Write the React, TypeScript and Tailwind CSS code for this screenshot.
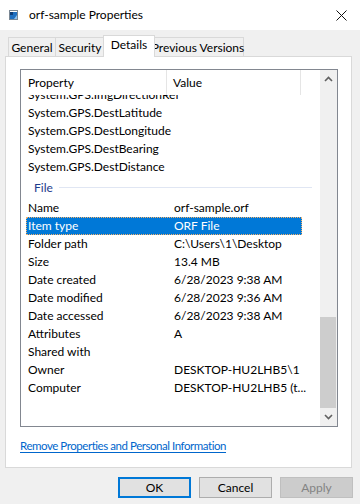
import { ReactNode } from "react";

type Row = { name: string; value: string; selected?: boolean };

const gpsRows = [
  "System.GPS.DestLatitude",
  "System.GPS.DestLongitude",
  "System.GPS.DestBearing",
  "System.GPS.DestDistance",
];

const fileRows: Row[] = [
  { name: "Name", value: "orf-sample.orf" },
  { name: "Item type", value: "ORF File", selected: true },
  { name: "Folder path", value: "C:\\Users\\1\\Desktop" },
  { name: "Size", value: "13.4 MB" },
  { name: "Date created", value: "6/28/2023 9:38 AM" },
  { name: "Date modified", value: "6/28/2023 9:36 AM" },
  { name: "Date accessed", value: "6/28/2023 9:38 AM" },
  { name: "Attributes", value: "A" },
  { name: "Shared with", value: "" },
  { name: "Owner", value: "DESKTOP-HU2LHB5\\1" },
  { name: "Computer", value: "DESKTOP-HU2LHB5 (t..." },
];

function Tab({ label, active, w }: { label: string; active?: boolean; w: string }) {
  if (active) {
    return (
      <div
        className={`${w} h-[22px] -mx-[2px] z-10 bg-white border border-b-0 border-[#d9d9d9] flex items-start justify-center pt-[3px] text-black shrink-0`}
      >
        {label}
      </div>
    );
  }
  return (
    <div
      className={`${w} h-[20px] bg-[#f0f0f0] border border-b-0 border-[#d9d9d9] -ml-px first:ml-0 flex items-center justify-center text-black shrink-0 whitespace-nowrap`}
    >
      {label}
    </div>
  );
}

function ItemRow({ row }: { row: Row }) {
  return (
    <div className="h-[18px] flex items-center pl-[5px] leading-[16px]">
      <div
        className={`w-[276px] h-[18px] flex items-center ${
          row.selected ? "bg-[#0078d7] text-white border border-dotted border-[#f5b26b]" : "text-black"
        }`}
      >
        <span className={`${row.selected ? "w-[147px] pl-[1px]" : "w-[148px] pl-[2px]"} shrink-0 whitespace-nowrap`}>
          {row.name}
        </span>
        <span className="whitespace-nowrap">{row.value}</span>
      </div>
    </div>
  );
}

function Btn({ children, kind }: { children: ReactNode; kind: "default" | "normal" | "disabled" }) {
  const cls =
    kind === "default"
      ? "border-2 border-[#0078d7] bg-[#e1e1e1] text-black"
      : kind === "normal"
      ? "border border-[#adadad] bg-[#e1e1e1] text-black"
      : "border border-[#bfbfbf] bg-[#cccccc] text-[#838383]";
  return <div className={`w-[73px] h-[21px] flex items-center justify-center ${cls}`}>{children}</div>;
}

export default function App() {
  return (
    <div
      className="w-[360px] h-[504px] bg-[#f0f0f0] flex flex-col text-[12px] leading-none overflow-hidden"
      style={{ fontFamily: 'Lato, "Liberation Sans", Arial, sans-serif' }}
    >
      {/* title bar */}
      <div className="h-[30px] bg-white flex items-center shrink-0">
        <svg width="9" height="10" viewBox="0 0 9 10" className="ml-[9px] mr-[11px]">
          <rect x="0.5" y="0.5" width="8" height="9" fill="#fff" stroke="#7a8794" />
          <rect x="1" y="2" width="7" height="7" fill="#1f6fc0" />
          <rect x="1" y="2" width="3" height="3" fill="#0d3d78" />
          <path d="M5 9 L8 5 L8 9 Z" fill="#8ec3f0" />
        </svg>
        <span className="text-[12px] text-black">orf-sample Properties</span>
        <svg width="11" height="11" viewBox="0 0 11 11" className="ml-auto mr-[13px]">
          <path d="M0.5 0.5 L10.5 10.5 M10.5 0.5 L0.5 10.5" stroke="#111" strokeWidth="1" />
        </svg>
      </div>

      {/* tabs */}
      <div className="h-[27px] flex items-end pl-[8px] shrink-0">
        <Tab label="General" w="w-[48px]" />
        <Tab label="Security" w="w-[50px]" />
        <Tab label="Details" w="w-[52px]" active />
        <Tab label="Previous Versions" w="w-[92px]" />
      </div>

      {/* panel */}
      <div className="mx-[5px] -mt-px w-[347px] h-[412px] bg-white border border-[#d9d9d9] flex flex-col shrink-0">
        <div className="mt-[12px] ml-[14px] w-[318px] h-[358px] border border-[#828790] flex">
          {/* list content */}
          <div className="w-[299px] h-full flex flex-col overflow-hidden">
            <div className="h-[25px] flex shrink-0 bg-white z-10 relative">
              <div className="w-[146px] pl-[7px] flex items-center border-r border-[#e5e5e5]">Property</div>
              <div className="w-[134px] pl-[6px] flex items-center border-r border-[#e5e5e5]">Value</div>
            </div>
            <div className="flex-1 overflow-hidden">
              <div className="-mt-[9px]">
                <ItemRow row={{ name: "System.GPS.ImgDirectionRef", value: "" }} />
                {gpsRows.map((n) => (
                  <ItemRow key={n} row={{ name: n, value: "" }} />
                ))}
                <div className="h-[23px] flex items-center pl-[13px]">
                  <span className="text-[#1e3c8c] pr-[6px]">File</span>
                  <div className="w-[253px] h-px bg-[#e0e6f3]" />
                </div>
                {fileRows.map((r) => (
                  <ItemRow key={r.name} row={r} />
                ))}
              </div>
            </div>
          </div>
          {/* scrollbar */}
          <div className="w-[17px] h-full bg-[#f0f0f0] flex flex-col">
            <div className="h-[17px] flex items-center justify-center">
              <svg width="9" height="6" viewBox="0 0 9 6">
                <path d="M1 5 L4.5 1.5 L8 5" stroke="#606060" strokeWidth="1.6" fill="none" />
              </svg>
            </div>
            <div className="flex-1 flex flex-col pr-px">
              <div className="h-[230px]" />
              <div className="flex-1 bg-[#cdcdcd]" />
            </div>
            <div className="h-[18px] flex items-center justify-center">
              <svg width="9" height="6" viewBox="0 0 9 6">
                <path d="M1 1 L4.5 4.5 L8 1" stroke="#606060" strokeWidth="1.6" fill="none" />
              </svg>
            </div>
          </div>
        </div>
        <div className="ml-[14px] mt-[11px] leading-[16px]">
          <span className="text-[#0066cc] underline underline-offset-[2px] text-[11.5px] tracking-[-0.45px]">
            Remove Properties and Personal Information
          </span>
        </div>
      </div>

      {/* buttons */}
      <div className="flex gap-[8px] justify-end pr-[7px] mt-[9px]">
        <Btn kind="default">OK</Btn>
        <Btn kind="normal">Cancel</Btn>
        <Btn kind="disabled">Apply</Btn>
      </div>
    </div>
  );
}
